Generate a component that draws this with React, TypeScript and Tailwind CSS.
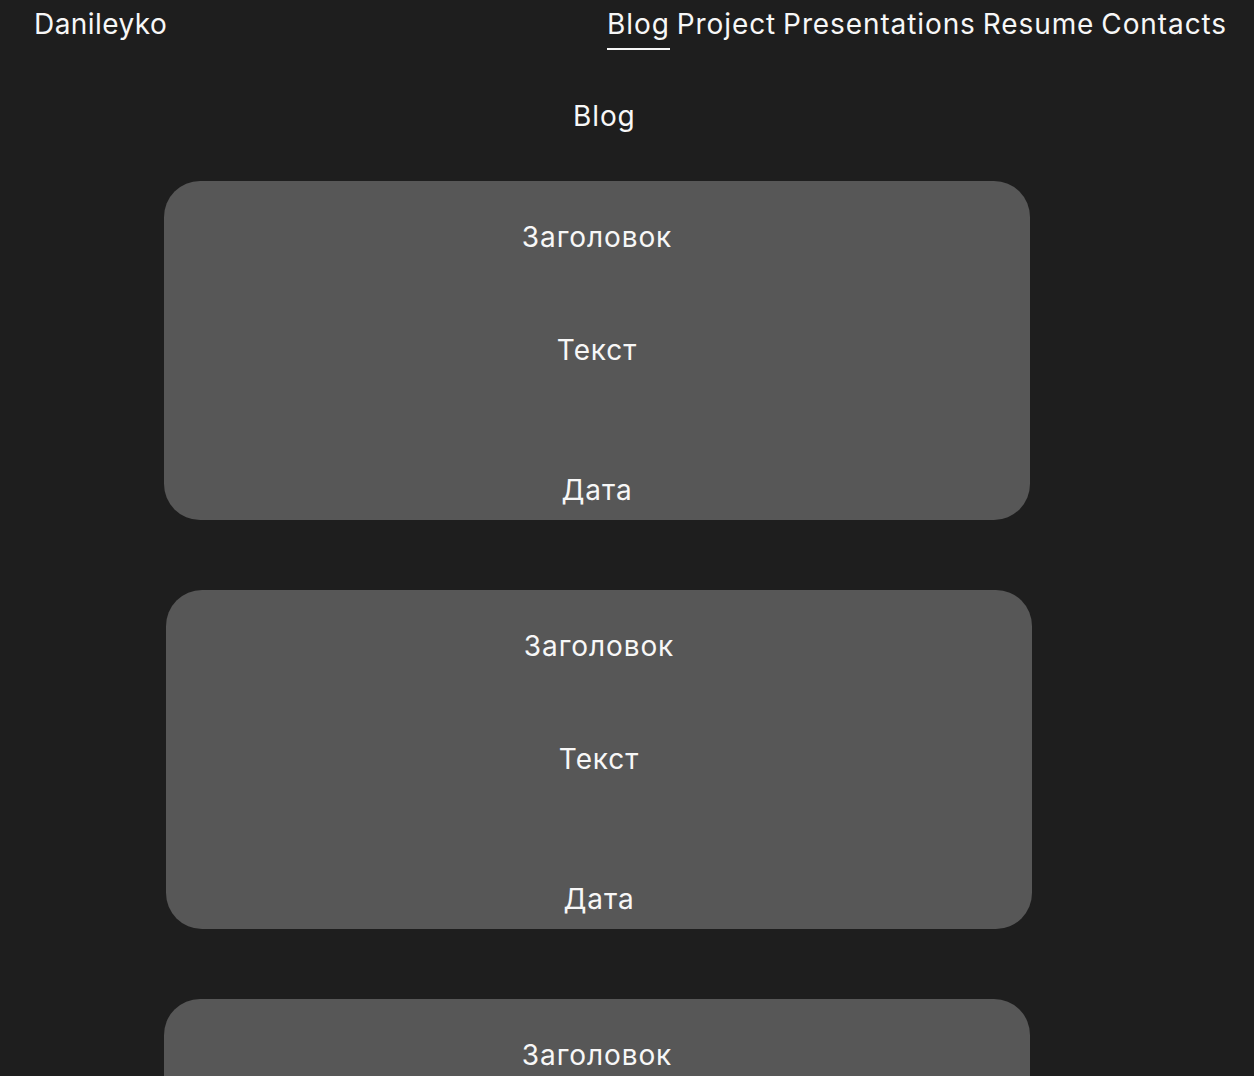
import React from 'react';

const navItems = ['Blog', 'Project', 'Presentations', 'Resume', 'Contacts'];

function PostCard({ shift = false }: { shift?: boolean }) {
  return (
    <div
      className={`flex h-[339px] w-[866px] flex-col items-center rounded-[36px] bg-[#575757] pt-[39px] text-[28px] leading-[34px] tracking-[0.9px] ${
        shift ? 'ml-[2px]' : ''
      }`}
    >
      <h2 className="font-normal">Заголовок</h2>
      <p className="mt-[79px]">Текст</p>
      <span className="mt-[106px]">Дата</span>
    </div>
  );
}

export default function App() {
  return (
    <div
      className="min-h-screen bg-[#1e1e1e] text-[#f7f7f7]"
      style={{ fontFamily: 'Inter, "Noto Sans", sans-serif' }}
    >
      <header className="flex items-start justify-between pl-[34px] pr-[27px] pt-[7px] text-[28px] leading-[34px]">
        <a className="block tracking-[0.45px]">Danileyko</a>
        <nav className="flex gap-[7px] tracking-[0.9px]">
          {navItems.map((item, i) => (
            <a
              key={item}
              className={`block pb-[7px] ${i === 0 ? 'border-b-2 border-[#f7f7f7]' : 'border-b-2 border-transparent'}`}
            >
              {item}
            </a>
          ))}
        </nav>
      </header>

      <main className="pb-[40px]">
        <h1 className="mt-[49px] pl-[573px] text-[28px] leading-[34px] font-normal tracking-[0.9px]">Blog</h1>
        <div className="mt-[48px] flex flex-col gap-[70px] pl-[164px]">
          <PostCard />
          <PostCard shift />
          <PostCard />
        </div>
      </main>
    </div>
  );
}
